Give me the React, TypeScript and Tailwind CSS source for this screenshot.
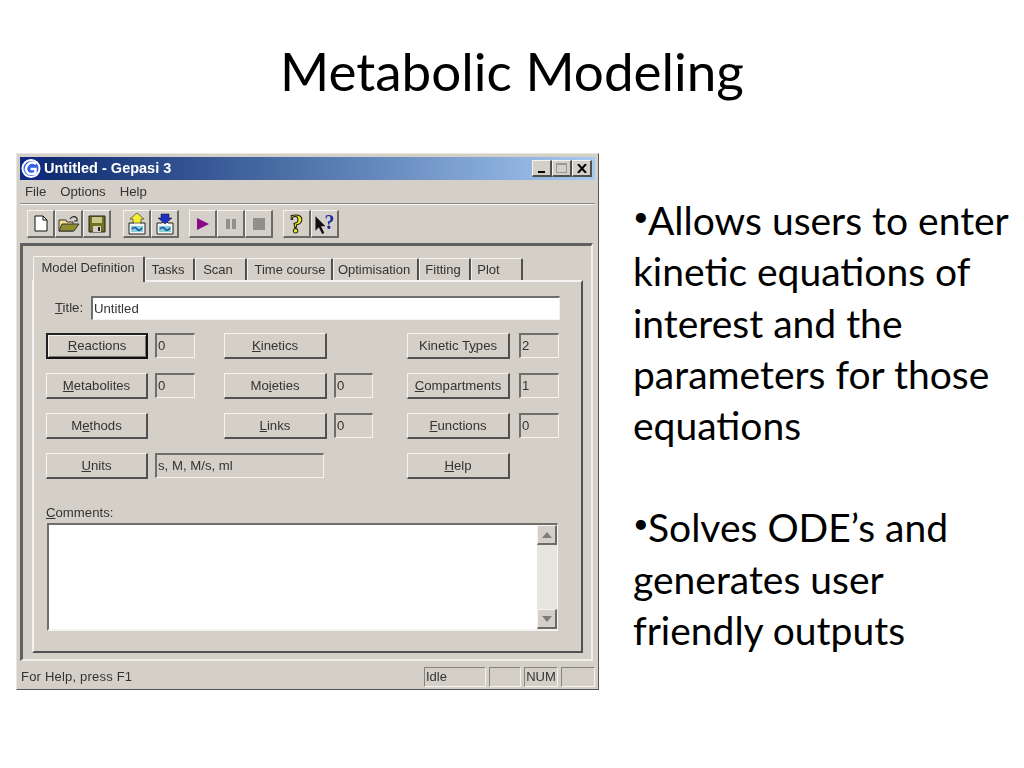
import React from 'react';

const face = 'bg-[#d4d0c8]';

function Btn({ children, primary }: { children: React.ReactNode; primary?: boolean }) {
  return (
    <button
      className={
        primary
          ? 'h-[26px] w-full border-2 border-t-[#222] border-l-[#222] border-r-[#111] border-b-[#111] bg-[#d4d0c8] text-[#333] shadow-[inset_1px_1px_0_#f4f3ef,inset_-1px_-1px_0_#777]'
          : 'h-[26px] w-full border-t border-l border-r-2 border-b-2 border-t-[#f4f3ef] border-l-[#f4f3ef] border-r-[#505050] border-b-[#505050] bg-[#d4d0c8] text-[#333]'
      }
    >
      {children}
    </button>
  );
}

function Field({ children, className }: { children?: React.ReactNode; className?: string }) {
  return (
    <div className={`flex h-[25px] items-center border-t-2 border-l-2 border-r border-b border-t-[#6e6e6a] border-l-[#6e6e6a] border-r-[#f4f3ef] border-b-[#f4f3ef] pl-[1px] text-[#333] ${className ?? ''}`}>
      {children}
    </div>
  );
}

function Tool({ children, w = 'w-[28px]' }: { children: React.ReactNode; w?: string }) {
  return (
    <div className={`flex h-[28px] ${w} items-center justify-center border-t border-l border-r-2 border-b-2 border-t-[#f4f3ef] border-l-[#f4f3ef] border-r-[#6a6a66] border-b-[#6a6a66]`}>
      {children}
    </div>
  );
}

function Caption({ children }: { children: React.ReactNode }) {
  return (
    <div className="flex h-[17px] w-[20px] items-center justify-center border-t border-l border-r-2 border-b-2 border-t-[#f4f3ef] border-l-[#f4f3ef] border-r-[#505050] border-b-[#505050] bg-[#d4d0c8]">
      {children}
    </div>
  );
}

function Tab({ label, w, active, pad = 'pr-[3px]' }: { label: string; w: string; active?: boolean; pad?: string }) {
  return (
    <div
      className={`${w} ${pad} flex items-center justify-center rounded-t-[2px] border-t border-l border-r-2 border-t-[#f4f3ef] border-l-[#f4f3ef] border-r-[#505050] text-[13px] text-[#333] ${
        active ? 'relative z-10 -mb-[2px] h-[26px] bg-[#d4d0c8] pb-[4px]' : 'h-[22px]'
      }`}
    >
      {label}
    </div>
  );
}

function UpDocIcon({ down }: { down?: boolean }) {
  return (
    <svg width="22" height="22" viewBox="0 0 22 22">
      <path d="M3 10h5l3-3 3 3h5v11H3z" fill="#f4f4f0" stroke="#222" />
      <rect x="5" y="13" width="12" height="6" fill="#7fd0d8" />
      <path d="M6 16q3-3 5 0t5-1" fill="none" stroke="#1c4f9a" strokeWidth="1.5" />
      {down ? <path d="M7 1h8v4h3l-7 6-7-6h3z" fill="#1f2fc0" stroke="#111" strokeWidth=".5" /> : <path d="M11 0l7 6h-3v4H7V6H4z" fill="#f4ee30" stroke="#222" strokeWidth=".6" />}
    </svg>
  );
}

export default function App() {
  return (
    <div className="h-[768px] w-[1024px] overflow-hidden bg-white font-['Lato',sans-serif] text-black">
      {/* Title */}
      <div className="h-[153px] pt-[40px] text-center text-[53px] leading-[62px]">Metabolic Modeling</div>

      <div className="flex pl-[16px]">
        {/* Gepasi window */}
        <div className={`${face} h-[537px] w-[583px] border border-t-[#e8e6e0] border-l-[#e8e6e0] border-r-[#555] border-b-[#555] p-[3px] font-['Liberation_Sans',sans-serif] text-[13.2px] blur-[0.4px]`}>
          <div className="flex h-[23px] items-center bg-gradient-to-r from-[#0a246a] to-[#a6caf0] pr-[3px] text-[14.5px] font-bold text-white">
            <svg width="24" height="23" viewBox="0 0 24 23" className="shrink-0">
              <rect width="24" height="23" fill="#0f2a80" />
              <circle cx="11" cy="11.5" r="8.5" fill="#2f5fe8" stroke="#fff" strokeWidth="2" />
              <path d="M16 7Q11 3.500 7.500 8t1 8.500q4.500 1.500 7-1V12h-5" fill="none" stroke="#fff" strokeWidth="2.500" />
            </svg>
            <span className="flex-1">Untitled - Gepasi 3</span>
            <div className="flex text-[#111]">
              <Caption><span className="mt-[7px] h-[2px] w-[7px] bg-black" /></Caption>
              <Caption><span className="h-[10px] w-[11px] border border-t-2 border-[#9a9892]" /></Caption>
              <Caption>
                <svg width="10" height="9" viewBox="0 0 10 9"><path d="M1 0l8 9M9 0L1 9" stroke="#000" strokeWidth="2" /></svg>
              </Caption>
            </div>
          </div>

          {/* Menu */}
          <div className="flex h-[23px] items-center gap-[14px] pl-[5px] text-[#333]">
            <span>File</span>
            <span>Options</span>
            <span>Help</span>
          </div>
          <div className="h-[2px] border-t border-b border-t-[#8a8a86] border-b-[#f4f3ef]" />

          {/* Toolbar */}
          <div className="flex h-[38px] items-start pt-[5px] pl-[7px]">
            <Tool>
              <svg width="14" height="17" viewBox="0 0 14 17"><path d="M1 1h8l4 4v11H1z" fill="#fff" stroke="#111" /><path d="M9 1v4h4" fill="none" stroke="#111" /></svg>
            </Tool>
            <Tool>
              <svg width="22" height="18" viewBox="0 0 22 18">
                <path d="M1 5h7l1 2h6v9H1z" fill="#f2e48c" stroke="#333" />
                <path d="M4 9h17l-5 7H1z" fill="#8e8e30" stroke="#333" />
                <path d="M12 4q3-4 7-1M19 3v3h-3" fill="none" stroke="#222" strokeWidth="1.2" />
              </svg>
            </Tool>
            <Tool>
              <svg width="18" height="18" viewBox="0 0 18 18">
                <path d="M1 1h16v16H1z" fill="#6f7020" stroke="#222" />
                <rect x="4" y="2" width="10" height="6" fill="#c9c98e" />
                <rect x="5" y="11" width="8" height="6" fill="#d4d0c8" />
                <rect x="10" y="12" width="2" height="4" fill="#222" />
              </svg>
            </Tool>
            <div className="w-[12px]" />
            <Tool><UpDocIcon /></Tool>
            <Tool><UpDocIcon down /></Tool>
            <div className="w-[10px]" />
            <Tool>
              <svg width="14" height="14" viewBox="0 0 14 14"><path d="M1 1l12 6-12 6z" fill="#8a0a8a" /></svg>
            </Tool>
            <Tool>
              <svg width="12" height="12" viewBox="0 0 12 12"><path d="M1 1h4v10H1zM7 1h4v10H7z" fill="#8f8f8b" /></svg>
            </Tool>
            <Tool><span className="h-[12px] w-[12px] bg-[#8f8f8b]" /></Tool>
            <div className="w-[10px]" />
            <Tool>
              <span className="font-['Liberation_Serif',serif] text-[28px] leading-none font-bold text-[#e8e820] [-webkit-text-stroke:1px_#111]">?</span>
            </Tool>
            <Tool>
              <svg width="12" height="20" viewBox="0 0 10 18" className="mr-[-2px]"><path d="M0 2l9 9H5l3 6-2 1-3-6-3 3z" fill="#111" /></svg>
              <span className="mb-[4px] font-['Liberation_Serif',serif] text-[20px] leading-none font-bold text-[#1a2aa0]">?</span>
            </Tool>
          </div>

          {/* Sunken frame around the tab control */}
          <div className="h-[418px] w-[573px] border-t-[3px] border-r-2 border-b-2 border-l-[3px] border-t-[#606060] border-r-[#f0eee8] border-b-[#f0eee8] border-l-[#606060] pt-[10px] pr-[8px] pb-[6px] pl-[9px]">
            <div className="flex h-[24px] items-end pl-[1px]">
              <Tab label="Model Definition" w="w-[112px]" active pad="pr-[1px]" />
              <Tab label="Tasks" w="w-[50px]" />
              <Tab label="Scan" w="w-[52px]" pad="pr-[5px]" />
              <Tab label="Time course" w="w-[86px]" pad="pl-[1px]" />
              <Tab label="Optimisation" w="w-[86px]" />
              <Tab label="Fitting" w="w-[52px]" />
              <Tab label="Plot" w="w-[52px]" pad="pr-[16px]" />
            </div>

            <div className="h-[373px] border-t-2 border-r-2 border-b-2 border-l-2 border-t-[#f4f3ef] border-r-[#505050] border-b-[#505050] border-l-[#f4f3ef]">
              <div className="mt-[14px] flex h-[24px] items-center pl-[21px] text-[#333]">
                <span className="w-[36px]"><u>T</u>itle:</span>
                <div className="flex h-[24px] w-[469px] items-center border-t-2 border-l-2 border-r border-b border-t-[#6e6e6a] border-l-[#6e6e6a] border-r-[#f4f3ef] border-b-[#f4f3ef] bg-white pl-[1px]">Untitled</div>
              </div>

              <div className="mt-[13px] ml-[12px] grid grid-cols-[102px_7px_40px_29px_103px_7px_39px_34px_103px_9px_40px] grid-rows-[26px_26px_26px_26px] gap-y-[14px]">
                <div className="col-start-1 row-start-1"><Btn primary><u>R</u>eactions</Btn></div>
                <Field className="col-start-3 row-start-1">0</Field>
                <div className="col-start-5 row-start-1"><Btn><u>K</u>inetics</Btn></div>
                <div className="col-start-9 row-start-1"><Btn>Kinetic T<u>y</u>pes</Btn></div>
                <Field className="col-start-11 row-start-1">2</Field>

                <div className="col-start-1 row-start-2"><Btn><u>M</u>etabolites</Btn></div>
                <Field className="col-start-3 row-start-2">0</Field>
                <div className="col-start-5 row-start-2"><Btn>Mo<u>i</u>eties</Btn></div>
                <Field className="col-start-7 row-start-2">0</Field>
                <div className="col-start-9 row-start-2"><Btn><u>C</u>ompartments</Btn></div>
                <Field className="col-start-11 row-start-2">1</Field>

                <div className="col-start-1 row-start-3"><Btn>M<u>e</u>thods</Btn></div>
                <div className="col-start-5 row-start-3"><Btn><u>L</u>inks</Btn></div>
                <Field className="col-start-7 row-start-3">0</Field>
                <div className="col-start-9 row-start-3"><Btn><u>F</u>unctions</Btn></div>
                <Field className="col-start-11 row-start-3">0</Field>

                <div className="col-start-1 row-start-4"><Btn><u>U</u>nits</Btn></div>
                <Field className="col-span-5 col-start-3 row-start-4 w-[169px]">s, M, M/s, ml</Field>
                <div className="col-start-9 row-start-4"><Btn><u>H</u>elp</Btn></div>
              </div>

              <div className="mt-[24px] ml-[12px] h-[18px] text-[#333]"><u>C</u>omments:</div>
              <div className="mt-[2px] ml-[13px] flex h-[108px] w-[511px] border-t-2 border-l-2 border-r border-b-2 border-t-[#6e6e6a] border-l-[#6e6e6a] border-r-[#f4f3ef] border-b-[#f4f3ef] bg-white">
                <div className="flex-1" />
                <div className="flex w-[20px] flex-col justify-between bg-[#e6e4df]">
                  <div className="flex h-[20px] items-center justify-center border-t border-l border-r-2 border-b-2 border-t-[#f4f3ef] border-l-[#f4f3ef] border-r-[#6a6a66] border-b-[#6a6a66] bg-[#d4d0c8]">
                    <svg width="10" height="6" viewBox="0 0 10 6"><path d="M5 0l5 6H0z" fill="#7d7d79" /></svg>
                  </div>
                  <div className="flex h-[20px] items-center justify-center border-t border-l border-r-2 border-b-2 border-t-[#f4f3ef] border-l-[#f4f3ef] border-r-[#6a6a66] border-b-[#6a6a66] bg-[#d4d0c8]">
                    <svg width="10" height="6" viewBox="0 0 10 6"><path d="M0 0h10L5 6z" fill="#7d7d79" /></svg>
                  </div>
                </div>
              </div>
            </div>
          </div>

          {/* Status bar */}
          <div className="flex h-[26px] items-center pt-[6px] text-[13px] text-[#333]">
            <span className="flex-1 pl-[1px] tracking-[0.2px]">For Help, press F1</span>
            <div className="flex h-[20px] w-[62px] items-center border-t border-l border-r border-b border-t-[#85857f] border-l-[#85857f] border-r-[#f4f3ef] border-b-[#f4f3ef] pl-[1px]">Idle</div>
            <div className="ml-[3px] h-[20px] w-[32px] border border-t-[#85857f] border-l-[#85857f] border-r-[#f4f3ef] border-b-[#f4f3ef]" />
            <div className="ml-[3px] flex h-[20px] w-[34px] items-center justify-center border border-t-[#85857f] border-l-[#85857f] border-r-[#f4f3ef] border-b-[#f4f3ef]">NUM</div>
            <div className="ml-[3px] h-[20px] w-[34px] border border-t-[#85857f] border-l-[#85857f] border-r-[#f4f3ef] border-b-[#f4f3ef]" />
          </div>
        </div>

        {/* Bullet text */}
        <div className="ml-[34px] w-[391px] pt-[42px] text-[39px] leading-[51.3px]">
          <p>
            <span className="inline-block w-[15px] align-[9px] text-[27px] leading-none">•</span>Allows users to enter
            <br />
            kinetic equations of
            <br />
            interest and the
            <br />
            parameters for those
            <br />
            equations
          </p>
          <p className="mt-[51px]">
            <span className="inline-block w-[15px] align-[9px] text-[27px] leading-none">•</span>Solves ODE’s and
            <br />
            generates user
            <br />
            friendly outputs
          </p>
        </div>
      </div>
    </div>
  );
}
